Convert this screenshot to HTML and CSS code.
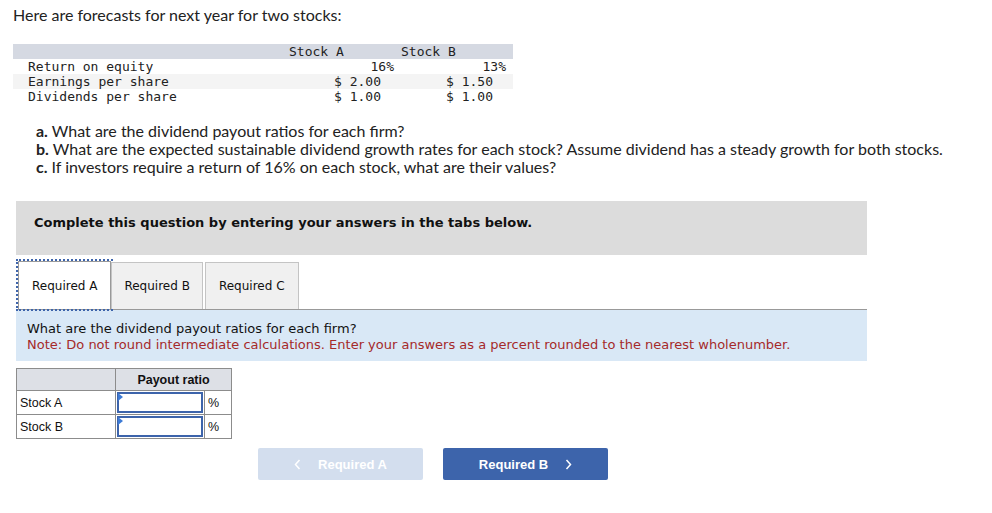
FILE: index.html
```html
<!DOCTYPE html>
<html>
<head>
<meta charset="utf-8">
<link rel="stylesheet" href="styles.css">
</head>
<body>
<div class="page">
  <p class="intro">Here are forecasts for next year for two stocks:</p>

  <div class="data">
    <div class="dh dl"></div>
    <div class="dh da">Stock A</div>
    <div class="dh db">Stock B</div>

    <div class="dl">Return on equity</div>
    <div class="dv pa">16%</div>
    <div class="dv pb">13%</div>

    <div class="dl alt">Earnings per share</div>
    <div class="dv alt ma">$ 2.00</div>
    <div class="dv alt mb">$ 1.50</div>

    <div class="dl">Dividends per share</div>
    <div class="dv ma">$ 1.00</div>
    <div class="dv mb">$ 1.00</div>
  </div>

  <div class="questions">
    <p><b>a.</b> What are the dividend payout ratios for each firm?</p>
    <p><b>b.</b> What are the expected sustainable dividend growth rates for each stock? Assume dividend has a steady growth for both stocks.</p>
    <p><b>c.</b> If investors require a return of 16% on each stock, what are their values?</p>
  </div>

  <div class="panel">
    <div class="banner">Complete this question by entering your answers in the tabs below.</div>

    <div class="tabs">
      <div class="tab active">Required A</div>
      <div class="tab">Required B</div>
      <div class="tab tab-c">Required C</div>
    </div>

    <div class="prompt">
      <div>What are the dividend payout ratios for each firm?</div>
      <div class="note">Note: Do not round intermediate calculations. Enter your answers as a percent rounded to the nearest wholenumber.</div>
    </div>

    <table class="answers">
      <tr class="head">
        <th class="c1"></th>
        <th colspan="2">Payout ratio</th>
      </tr>
      <tr>
        <td class="c1">Stock A</td>
        <td class="c2"><div class="inp"></div></td>
        <td class="c3">%</td>
      </tr>
      <tr>
        <td class="c1">Stock B</td>
        <td class="c2"><div class="inp"></div></td>
        <td class="c3">%</td>
      </tr>
    </table>

    <div class="nav">
      <div class="btn prev"><svg class="chev" width="7" height="11" viewBox="0 0 7 11"><path d="M5.5 1 L1.5 5.5 L5.5 10" fill="none" stroke="#fff" stroke-width="1.5"/></svg>Required A</div>
      <div class="btn next">Required B<svg class="chev" width="7" height="11" viewBox="0 0 7 11"><path d="M1.5 1 L5.5 5.5 L1.5 10" fill="none" stroke="#fff" stroke-width="1.5"/></svg></div>
    </div>
  </div>
</div>
</body>
</html>
```

FILE: styles.css
```css
* { box-sizing: border-box; }
html, body { margin: 0; padding: 0; background: #fff; }
body { font-family: "Lato", "Open Sans", sans-serif; color: #222; }

.page { padding: 5px 0 0 13px; }

.intro {
  margin: 0;
  font-size: 16px;
  line-height: 20px;
  color: #222;
}

.data {
  margin-top: 19px;
  width: 500px;
  display: grid;
  grid-template-columns: 272px 113px 115px;
  font-family: "DejaVu Sans Mono", monospace;
  font-size: 13px;
  line-height: 15px;
  color: #222;
}
.data > div { height: 15px; white-space: pre; }
.dh { background: #d5d9e2; }
.dl { padding-left: 15px; }
.da { padding-left: 4px; }
.db { padding-left: 3px; }
.dv { text-align: right; }
.pa { padding-right: 4px; }
.pb { padding-right: 7px; }
.ma { padding-right: 17px; }
.mb { padding-right: 20px; }
.alt { background: #f4f4f4; }

.questions { margin: 18px 0 0 23px; font-size: 16px; line-height: 18px; color: #222; }
.questions p { margin: 0; }
.questions b { font-weight: 700; }

.panel { margin: 25px 0 0 3px; width: 851px; }

.banner {
  background: #dcdcdc;
  height: 54px;
  padding: 14px 0 0 18px;
  line-height: 16px;
  font-family: "DejaVu Sans", Verdana, sans-serif;
  font-weight: bold;
  font-size: 13px;
  color: #111;
}

.tabs {
  margin-top: 7px;
  display: flex;
  height: 48px;
  border-bottom: 1px solid #999;
  align-items: flex-end;
}
.tab {
  height: 47px;
  padding: 0 12px;
  display: flex;
  align-items: center;
  background: #f0f0f0;
  border: 1px solid #c4c4c4;
  border-bottom: none;
  font-family: "DejaVu Sans", Verdana, sans-serif;
  font-size: 12px;
  color: #111;
}
.tab.active {
  background: #fff;
  outline: 2px dotted #3d64ab;
  outline-offset: 0;
  height: 48px;
  margin: 0 0 0 2px;
  padding: 0 13px;
  border-color: #999;
}
.tab-c { margin-left: 2px; padding: 0 13px; }

.prompt {
  background: #d9e8f6;
  padding: 11px 11px 8px;
  font-family: "DejaVu Sans", Verdana, sans-serif;
  font-size: 13px;
  line-height: 16px;
  color: #111;
}
.note { color: #a52a2a; }

.answers {
  margin-top: 7px;
  border-collapse: collapse;
  font-family: "Liberation Sans", Arial, sans-serif;
  font-size: 12.5px;
  color: #111;
}
.answers th, .answers td {
  border: 1px solid #8c8c8c;
  padding: 0;
  height: 23px;
}
.answers .head th {
  background: #dde0e6;
  font-weight: bold;
  height: 22px;
}
.answers .c1 { width: 99px; padding-left: 3px; text-align: left; }
.answers .c2 { width: 89px; padding: 1px; }
.answers .c3 { width: 27px; padding-left: 3px; }
.inp {
  position: relative;
  height: 21px;
  border: 2px solid #3d64ab;
  background: #fff;
}
.inp::before {
  content: "";
  position: absolute;
  left: -1px;
  top: -1px;
  border-top: 4px solid transparent;
  border-bottom: 4px solid transparent;
  border-left: 5px solid #3d7bd6;
}

.nav {
  margin: 9px 0 0 242px;
  display: flex;
  gap: 20px;
}
.btn {
  width: 165px;
  height: 32px;
  border-radius: 2px;
  display: flex;
  align-items: center;
  justify-content: center;
  font-family: "Liberation Sans", Arial, sans-serif;
  font-weight: bold;
  font-size: 13px;
  color: #fff;
}
.btn.prev { background: #d3deee; }
.btn.next { background: #3d64ab; }
.prev .chev { margin-right: 17px; }
.next .chev { margin-left: 17px; }
```
